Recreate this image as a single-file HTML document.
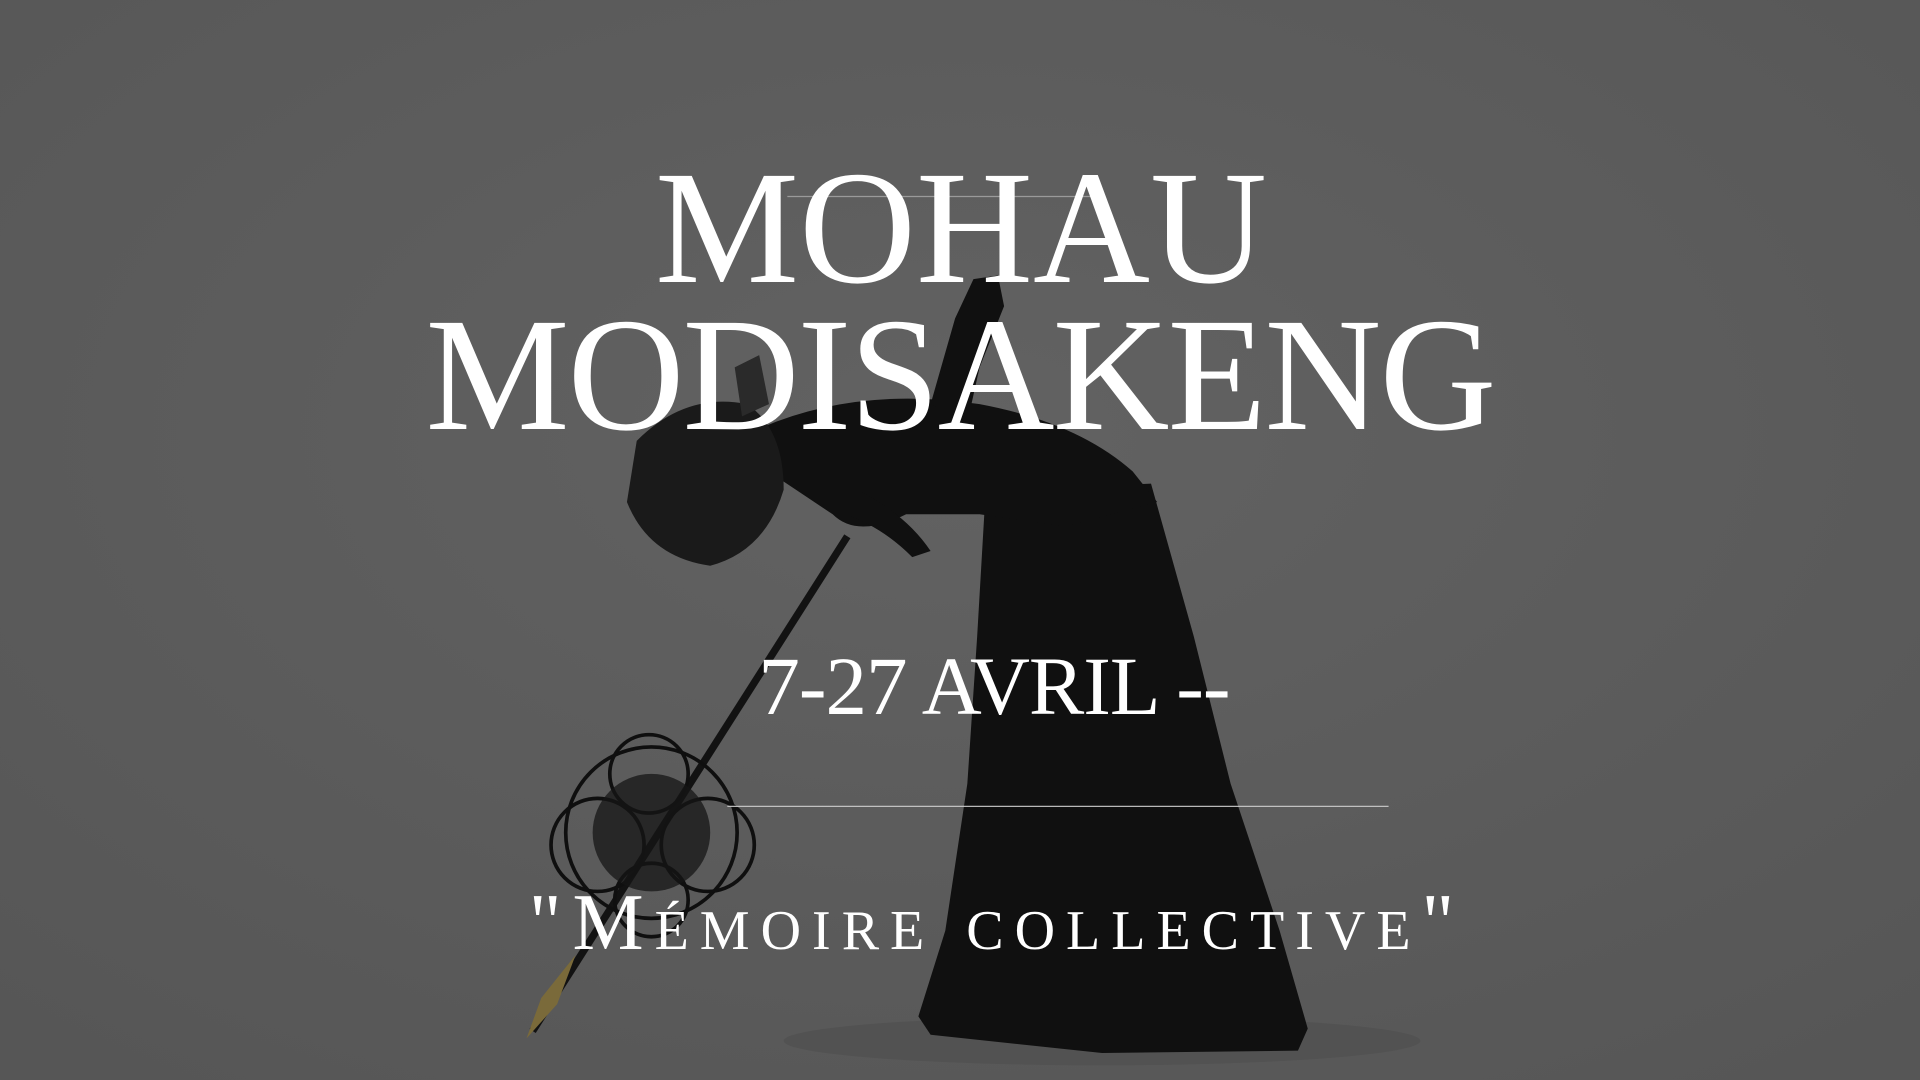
<!DOCTYPE html>
<html><head><meta charset="utf-8"><style>
html,body{margin:0;padding:0;width:1920px;height:1080px;overflow:hidden;background:#5e5e5e;}
.t{position:absolute;left:0;width:1920px;text-align:center;color:#fff;font-family:"Liberation Serif",serif;line-height:1;white-space:nowrap;}
</style></head><body>
<svg style="position:absolute;left:0;top:0" width="1920" height="1080" viewBox="0 0 1568 882" preserveAspectRatio="none">
<defs><radialGradient id="bg" cx="50%" cy="40%" r="75%"><stop offset="0" stop-color="#626262"/><stop offset="1" stop-color="#565656"/></radialGradient></defs>
<rect width="1568" height="882" fill="url(#bg)"/>
<ellipse cx="900" cy="850" rx="260" ry="20" fill="#4e4e4e" opacity="0.6"/>
<g fill="#101010">
<path d="M805 400 L940 395 L975 520 L1005 640 L1045 760 L1068 840 L1060 858 L900 860 L760 845 L750 830 L772 760 L790 640 L798 520 Z"/>
<path d="M620 350 Q700 315 800 330 Q880 345 925 385 L945 410 L870 430 L800 420 L740 420 Q700 440 680 420 Q650 400 620 380 Z"/>
<path d="M760 330 L780 260 L795 228 L815 225 L820 250 L800 300 L790 345 Z"/>
<path d="M700 400 Q740 420 760 450 L745 455 Q720 430 690 420 Z"/>
<path d="M520 360 Q560 320 610 330 Q640 350 640 400 Q625 450 580 462 Q530 455 512 410 Z" fill="#1a1a1a"/>
<path d="M600 300 L620 290 L628 330 L606 340 Z" fill="#2a2a2a"/>
</g>
<line x1="692" y1="438" x2="435" y2="842" stroke="#121212" stroke-width="6"/>
<path d="M470 780 L455 820 L430 848 L442 815 Z" fill="#7a6a3a"/>
<g fill="none" stroke="#0f0f0f" stroke-width="3">
<circle cx="532" cy="680" r="70"/>
<circle cx="530" cy="632" r="32"/>
<circle cx="488" cy="690" r="38"/>
<circle cx="578" cy="690" r="38"/>
<circle cx="532" cy="735" r="30"/>
</g>
<circle cx="532" cy="680" r="48" fill="#151515" opacity="0.75"/>
<line x1="643" y1="160.5" x2="895" y2="160.5" stroke="#aaa" stroke-width="1" opacity="0.8"/>
<line x1="594" y1="658.5" x2="1134" y2="658.5" stroke="#ccc" stroke-width="1" opacity="0.9"/>
</svg>
<div class="t" style="top:148px;font-size:162px;left:1px;">MOHAU</div>
<div class="t" style="top:295px;font-size:162px;letter-spacing:-2px;">MODISAKENG</div>
<div class="t" style="top:645px;font-size:83px;left:34px;letter-spacing:-1px;">7-27 AVRIL --</div>
<div class="t" style="top:883px;font-size:80px;left:37px;font-variant:small-caps;letter-spacing:11px;">"Mémoire collective"</div>
</body></html>
